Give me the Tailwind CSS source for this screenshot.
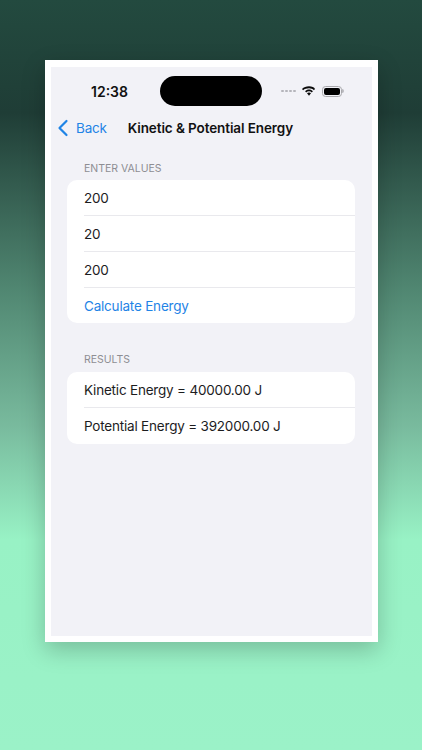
<!DOCTYPE html>
<html>
  <head>
    <meta charset="UTF-8">
    <meta name="viewport" content="width=device-width, initial-scale=1.0">
    <title>Kinetic & Potential Energy</title>
    <script src="https://cdn.jsdelivr.net/npm/@tailwindcss/browser@4"></script>
  </head>
  <body>
    <div class="w-[422px] h-[750px] overflow-hidden bg-[linear-gradient(180deg,#234a3f_0%,#1f3d36_15%,#4f8570_38%,#79bb9e_57%,#98f2c5_72%,#9bf2c8_100%)] pt-[60px] pl-[45px] font-['Inter','Noto_Sans',sans-serif]">
      <!-- phone frame -->
      <div class="w-[333px] h-[582px] bg-white pt-[7px] px-[6px] shadow-[0_8px_22px_rgba(0,0,0,0.22)]">
        <div class="h-[569px] bg-[#f2f2f7] flex flex-col">
          <!-- status bar -->
          <div class="flex items-center h-[48px] shrink-0">
            <span class="w-[109px] pl-[40px] text-[14px] font-semibold text-[#111]">12:38</span>
            <div class="w-[102px] h-[30px] rounded-full bg-black"></div>
            <div class="flex items-center ml-[19px]">
              <div class="flex gap-[1.5px]">
                <span class="size-[2.5px] rounded-full bg-[#b5b5bb]"></span>
                <span class="size-[2.5px] rounded-full bg-[#b5b5bb]"></span>
                <span class="size-[2.5px] rounded-full bg-[#b5b5bb]"></span>
                <span class="size-[2.5px] rounded-full bg-[#b5b5bb]"></span>
              </div>
              <svg class="ml-[6px]" width="14" height="11" viewBox="0 0 14 11" fill="#0b0b0b">
                <path d="M7 2.300c1.900 0 3.600.7 4.900 1.900l1.100-1.300C12.300 1.300 9.800.3 7 .3S1.700 1.300 0 2.900l1.100 1.300C2.400 3 5.100 2.300 7 2.300z"/>
                <path d="M7 5.300c1.100 0 2.100.4 2.800 1.100l1.100-1.200C9.800 4.100 8.500 3.500 7 3.500s-2.800.6-3.900 1.700l1.100 1.200C4.900 5.700 5.900 5.300 7 5.300z"/>
                <path d="M7 6.500c-.8 0-1.500.3-2 .8L7 9.800l2-2.500C8.500 6.800 7.800 6.500 7 6.500z"/>
              </svg>
              <div class="ml-[6px] flex items-center">
                <div class="w-[20px] h-[11px] rounded-[3.500px] border border-[#a9a9ad] p-[1px]">
                  <div class="w-full h-full rounded-[2px] bg-black"></div>
                </div>
                <div class="w-[1.5px] h-[4px] ml-[0.5px] rounded-r-sm bg-[#b9b9bd]"></div>
              </div>
            </div>
          </div>
          <!-- nav -->
          <div class="flex items-center h-[24px] mt-[1px] shrink-0">
            <svg class="ml-[6px]" width="12" height="18" viewBox="0 0 12 18" fill="none" stroke="#1f84e6" stroke-width="2.200" stroke-linecap="round" stroke-linejoin="round">
              <path d="M9.500 2 L2.500 9 L9.500 16"/>
            </svg>
            <span class="ml-[7px] text-[13.500px] tracking-[-0.2px] text-[#1f84e6]">Back</span>
            <span class="ml-[21px] text-[13.500px] tracking-[-0.1px] font-semibold text-[#111]">Kinetic &amp; Potential Energy</span>
          </div>
          <!-- enter values -->
          <p class="mt-[21px] pl-[33px] text-[10.500px] leading-[16px] text-[#8e8e93]">ENTER VALUES</p>
          <div class="mt-[3px] ml-[16px] w-[288px] rounded-[10px] bg-white text-[13.500px] tracking-[-0.2px] text-[#1c1c1e]">
            <div class="h-[36px] ml-[17px] pt-[2px] flex items-center border-b border-[#e9e9ed]">200</div>
            <div class="h-[36px] ml-[17px] pt-[2px] flex items-center border-b border-[#e9e9ed]">20</div>
            <div class="h-[36px] ml-[17px] pt-[2px] flex items-center border-b border-[#e9e9ed]">200</div>
            <div class="h-[35px] ml-[17px] pt-[2px] flex items-center text-[#1f84e6]">Calculate Energy</div>
          </div>
          <!-- results -->
          <p class="mt-[29px] pl-[33px] text-[10.500px] leading-[16px] text-[#8e8e93]">RESULTS</p>
          <div class="mt-[4px] ml-[16px] w-[288px] rounded-[10px] bg-white text-[13.500px] tracking-[-0.2px] text-[#1c1c1e]">
            <div class="h-[36px] ml-[17px] pt-[2px] flex items-center border-b border-[#e9e9ed]">Kinetic Energy = 40000.00 J</div>
            <div class="h-[36px] ml-[17px] flex items-center">Potential Energy = 392000.00 J</div>
          </div>
        </div>
      </div>
    </div>
  </body>
</html>
